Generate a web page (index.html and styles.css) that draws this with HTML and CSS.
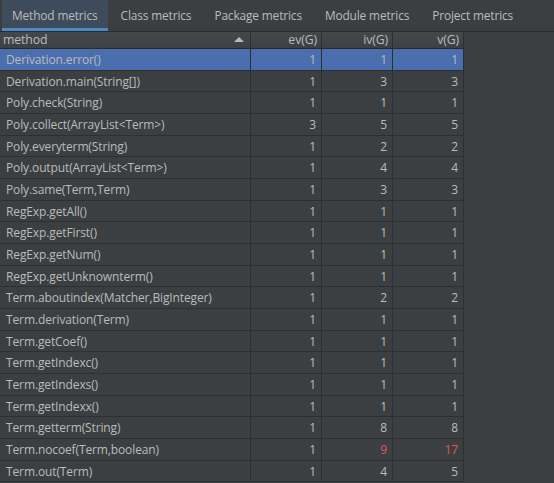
FILE: index.html
```html
<!DOCTYPE html>
<html>
<head>
<meta charset="utf-8">
<link rel="stylesheet" href="styles.css">
</head>
<body>
<div class="tabs">
  <div class="tab active">Method metrics</div>
  <div class="tab">Class metrics</div>
  <div class="tab">Package metrics</div>
  <div class="tab">Module metrics</div>
  <div class="tab">Project metrics</div>
</div>
<div class="table">
  <div class="row head">
    <div class="c m">method<span class="arrow"></span></div>
    <div class="c n">ev(G)</div>
    <div class="c n">iv(G)</div>
    <div class="c n">v(G)</div>
  </div>
  <div class="row sel"><div class="c m">Derivation.error()</div><div class="c n">1</div><div class="c n">1</div><div class="c n">1</div></div>
  <div class="row"><div class="c m">Derivation.main(String[])</div><div class="c n">1</div><div class="c n">3</div><div class="c n">3</div></div>
  <div class="row"><div class="c m">Poly.check(String)</div><div class="c n">1</div><div class="c n">1</div><div class="c n">1</div></div>
  <div class="row"><div class="c m">Poly.collect(ArrayList&lt;Term&gt;)</div><div class="c n">3</div><div class="c n">5</div><div class="c n">5</div></div>
  <div class="row"><div class="c m">Poly.everyterm(String)</div><div class="c n">1</div><div class="c n">2</div><div class="c n">2</div></div>
  <div class="row"><div class="c m">Poly.output(ArrayList&lt;Term&gt;)</div><div class="c n">1</div><div class="c n">4</div><div class="c n">4</div></div>
  <div class="row"><div class="c m">Poly.same(Term,Term)</div><div class="c n">1</div><div class="c n">3</div><div class="c n">3</div></div>
  <div class="row"><div class="c m">RegExp.getAll()</div><div class="c n">1</div><div class="c n">1</div><div class="c n">1</div></div>
  <div class="row"><div class="c m">RegExp.getFirst()</div><div class="c n">1</div><div class="c n">1</div><div class="c n">1</div></div>
  <div class="row"><div class="c m">RegExp.getNum()</div><div class="c n">1</div><div class="c n">1</div><div class="c n">1</div></div>
  <div class="row"><div class="c m">RegExp.getUnknownterm()</div><div class="c n">1</div><div class="c n">1</div><div class="c n">1</div></div>
  <div class="row"><div class="c m">Term.aboutindex(Matcher,BigInteger)</div><div class="c n">1</div><div class="c n">2</div><div class="c n">2</div></div>
  <div class="row"><div class="c m">Term.derivation(Term)</div><div class="c n">1</div><div class="c n">1</div><div class="c n">1</div></div>
  <div class="row"><div class="c m">Term.getCoef()</div><div class="c n">1</div><div class="c n">1</div><div class="c n">1</div></div>
  <div class="row"><div class="c m">Term.getIndexc()</div><div class="c n">1</div><div class="c n">1</div><div class="c n">1</div></div>
  <div class="row"><div class="c m">Term.getIndexs()</div><div class="c n">1</div><div class="c n">1</div><div class="c n">1</div></div>
  <div class="row"><div class="c m">Term.getIndexx()</div><div class="c n">1</div><div class="c n">1</div><div class="c n">1</div></div>
  <div class="row"><div class="c m">Term.getterm(String)</div><div class="c n">1</div><div class="c n">8</div><div class="c n">8</div></div>
  <div class="row"><div class="c m">Term.nocoef(Term,boolean)</div><div class="c n">1</div><div class="c n red">9</div><div class="c n red">17</div></div>
  <div class="row"><div class="c m">Term.out(Term)</div><div class="c n">1</div><div class="c n">4</div><div class="c n">5</div></div>
</div>
</body>
</html>
```
FILE: styles.css
```css
html, body {
  margin: 0;
  padding: 0;
  background: #3c3f41;
  font-family: "Open Sans", "Noto Sans", sans-serif;
  font-size: 12px;
  letter-spacing: -0.12px;
  color: #bbbbbb;
  overflow: hidden;
}
.tabs {
  display: flex;
  height: 31px;
  padding-left: 2px;
  background: #3c3f41;
  border-bottom: 1px solid #2b2b2b;
  box-sizing: content-box;
  white-space: nowrap;
}
.tab {
  padding: 0 10px 0 13px;
  line-height: 31px;
  height: 31px;
  box-sizing: border-box;
  white-space: nowrap;
  flex: none;
  font-size: 11.85px;
}
.tab.active {
  padding: 0 10px;
  background: #3e4b5b;
  border-bottom: 3px solid #4a88c7;
}
.table {
  width: 464px;
}
.row {
  display: flex;
  height: 21.68px;
  box-sizing: border-box;
  border-bottom: 1px solid #2d2f31;
  line-height: 21px;
}
.row.head {
  height: 17px;
  line-height: 16px;
  background: linear-gradient(#45484a, #3e4143);
  border-bottom: 1px solid #2b2b2b;
  font-size: 12.3px;
}
.c {
  box-sizing: border-box;
  border-right: 1px solid #2d2f31;
  white-space: nowrap;
  overflow: hidden;
}
.c.m {
  width: 251px;
  padding-left: 6px;
  position: relative;
}
.head .c.m { padding-left: 3px; }
.c.n {
  width: 71px;
  text-align: right;
  padding-right: 5px;
}
.head .c.n { padding-right: 4px; }
.row.sel { background: #4b6eaf; }
.red { color: #e05555; }
.arrow {
  position: absolute;
  right: 6px;
  top: 5px;
  width: 0;
  height: 0;
  border-left: 5px solid transparent;
  border-right: 5px solid transparent;
  border-bottom: 5px solid #bbbbbb;
}
```
